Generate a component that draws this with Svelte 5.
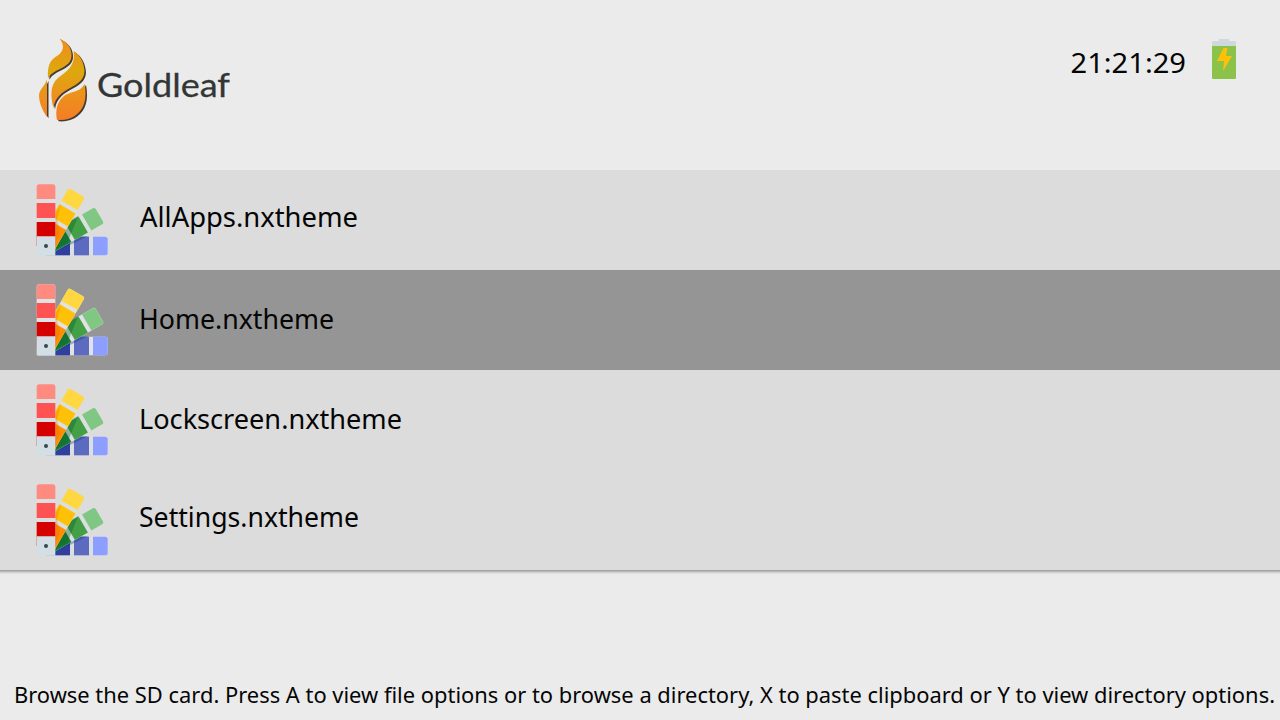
<script>
  const files = [
    { name: 'AllApps.nxtheme', x: 140, width: 218, baseline: 57 },
    { name: 'Home.nxtheme', x: 139, width: 195, baseline: 59, selected: true },
    { name: 'Lockscreen.nxtheme', x: 139, width: 263, baseline: 59 },
    { name: 'Settings.nxtheme', x: 139, width: 220, baseline: 57 }
  ];
  const strips = [
    { angle: 90, colors: ['#8c9eff', '#5c6bc0', '#303f9f'] },
    { angle: 60, colors: ['#81c784', '#43a047', '#1b8038'] },
    { angle: 30, colors: ['#ffd740', '#ffc107', '#ff8f00'] },
    { angle: 0, colors: ['#ff8a80', '#ff5252', '#d50000'] }
  ];
</script>

<div class="screen">
  <header>
    <svg class="logo" width="210" height="100" viewBox="30 30 210 100">
      <defs>
        <linearGradient id="flame" gradientUnits="userSpaceOnUse" x1="64" y1="38" x2="64" y2="122">
          <stop offset="0" stop-color="#f28b1c" />
          <stop offset="0.4" stop-color="#dda80d" />
          <stop offset="0.68" stop-color="#ed911c" />
          <stop offset="1" stop-color="#f57b26" />
        </linearGradient>
        <g id="leaf">
          <path d="M59.500 38.500C67 42 72 48 71.500 56C71 69 53 68 48 78.500C47 66 50 60 57 56C63 52 65.500 46 59.500 38.500Z" />
          <path d="M73.500 51C80 55 84 62 84.500 71C84 90 57 85 53.500 108C50 95 50.500 84 58 78C66 72 76 66 73.500 51Z" />
          <path d="M47 79.500V117C42 110 39 102 39 95C39.500 89 45 86 47 79.500Z" />
          <path d="M84.500 83.500C87.500 99 84 109 76 115C71 119 65 120.500 57 120C55 111 57 102 63 97C69 91 81 93 84.500 83.500Z" />
        </g>
      </defs>
      <use href="#leaf" fill="#453b33" transform="translate(1.500 1.300)" />
      <use href="#leaf" fill="url(#flame)" />
      <text class="brand" x="97" y="97" textLength="133" lengthAdjust="spacingAndGlyphs">Goldleaf</text>
    </svg>
    <div class="status">
      <svg width="120" height="40" viewBox="0 0 120 40">
        <text x="0.500" y="33.500" font-size="28" textLength="115.500" lengthAdjust="spacingAndGlyphs">21:21:29</text>
      </svg>
      <svg width="24" height="40" viewBox="0 0 24 40">
        <path d="M0 7V3Q0 2 1 2H7V0H17V2H23Q24 2 24 3V7Z" fill="#cfd8dc" />
        <path d="M0 7H24V39Q24 40 23 40H1Q0 40 0 39Z" fill="#8bc34a" />
        <path d="M11.500 9H15.500L14 17H20L11 32L12 22H5Z" fill="#ffc107" />
      </svg>
    </div>
  </header>

  <main>
    {#each files as file}
      <div class="row" class:selected={file.selected}>
        <svg width="1280" height="100" viewBox="0 0 1280 100">
          <svg x="36" y="14" width="72" height="72" viewBox="18 27 216 216">
            {#each strips as strip}
              <g transform="translate(48 213) rotate({strip.angle})">
                <path d="M-28 0V-179Q-28 -185 -22 -185H22Q28 -185 28 -179V0Z" fill={file.selected ? '#e0e2e3' : '#dcdfe0'} />
                <path d="M-28 -141V-177Q-28 -185 -20 -185H20Q28 -185 28 -177V-141Z" fill={strip.colors[0]} />
                <rect x="-28" y="-129" width="56" height="45" fill={strip.colors[1]} />
                <rect x="-28" y="-72" width="56" height="72" fill={strip.colors[2]} />
              </g>
              {#if strip.angle === 90}
                <path d="M76 231L174 184H120L76 210Z" fill="#173783" opacity="0.35" />
              {:else if strip.angle === 60}
                <path d="M76 213L120 137L145 122L112 205L76 223Z" fill="#075d28" opacity="0.35" />
              {:else if strip.angle === 30}
                <path d="M76 116L93 88L81 135L90 174L76 204Z" fill="#e06800" opacity="0.3" />
              {/if}
            {/each}
            <path d="M20 184H76V242H24Q20 242 20 238Z" fill="#d3dfe4" />
            <circle cx="48" cy="213" r="6" fill="#37474f" />
          </svg>
          <text x={file.x} y={file.baseline} font-size="28" textLength={file.width} lengthAdjust="spacingAndGlyphs">{file.name}</text>
        </svg>
      </div>
    {/each}
  </main>

  <footer>
    <svg width="1280" height="50" viewBox="0 0 1280 50">
      <text x="14" y="33" font-size="22" textLength="1261" lengthAdjust="spacingAndGlyphs">Browse the SD card. Press A to view file options or to browse a directory, X to paste clipboard or Y to view directory options.</text>
    </svg>
  </footer>
</div>

<style>
  .screen {
    width: 1280px;
    height: 720px;
    overflow: hidden;
    display: flex;
    flex-direction: column;
    background: #ebebeb;
    font-family: 'Noto Sans', sans-serif;
  }
  svg { display: block; }
  text { fill: #050505; }
  header {
    height: 170px;
    box-sizing: border-box;
    padding: 30px 44px 0 30px;
    display: flex;
    justify-content: space-between;
  }
  .brand {
    font-family: Lato, sans-serif;
    font-size: 33px;
    fill: #333637;
    stroke: #333637;
    stroke-width: 0.3px;
  }
  .status {
    display: flex;
    gap: 22px;
    padding-top: 9px;
  }
  main {
    background: #dcdcdc;
    box-shadow: 0 1px 0 #a3a3a3, 0 2px 0 #b9b9b9, 0 3px 0 #d0d0d0, 0 4px 0 #e1e1e1;
  }
  .row { height: 100px; }
  .selected { background: #959595; }
  footer { margin-top: auto; }
</style>
